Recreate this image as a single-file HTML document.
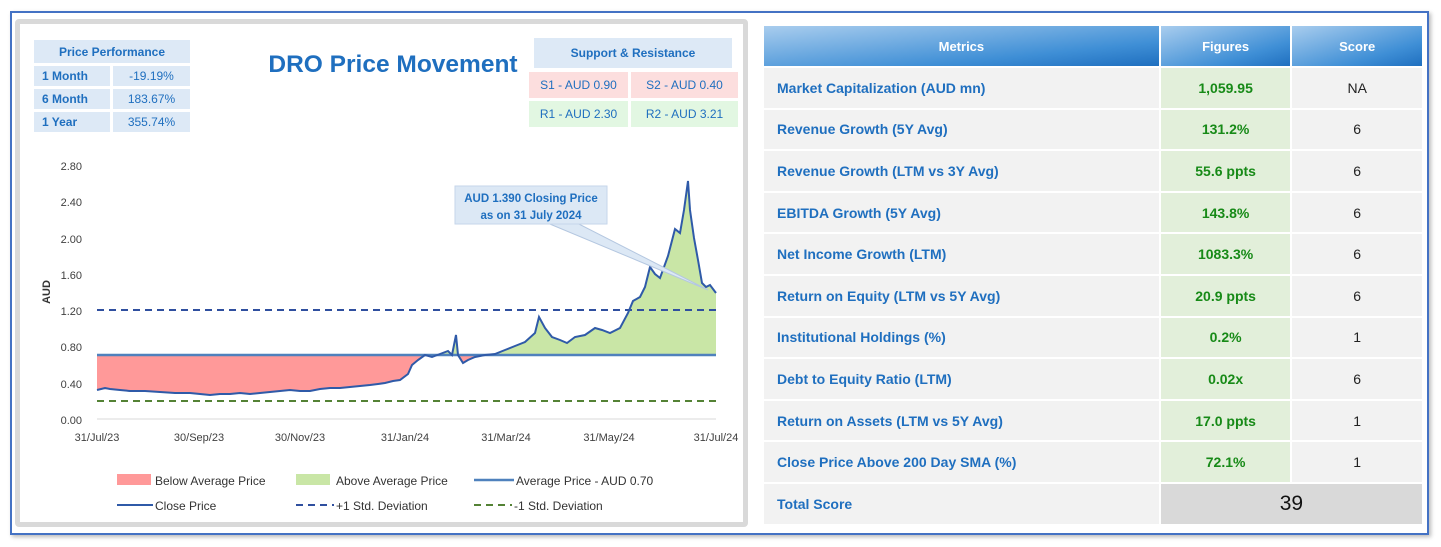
<!DOCTYPE html>
<html><head><meta charset="utf-8"><style>
*{margin:0;padding:0;box-sizing:border-box}
body{width:1441px;height:547px;background:#fff;position:relative;overflow:hidden;font-family:"Liberation Sans",sans-serif}
.outer{position:absolute;left:10px;top:11px;width:1419px;height:524px;border:2px solid #4472c4;box-shadow:2px 2px 4px #bbb}
.lp{position:absolute;left:15px;top:19px;width:733px;height:508px;border:5px solid #d9d9d9;border-radius:4px;background:#fff}
.c{position:absolute;display:flex;align-items:center;justify-content:center;font-size:13px;color:#1f6fbf}
</style></head><body>
<div class="outer"></div>
<div class="lp"></div>
<div class="c" style="left:34px;top:40px;width:156px;height:23px;background:#dde9f6;font-weight:bold;font-size:12px">Price Performance</div>
<div class="c" style="left:34px;top:66px;width:76px;height:20px;background:#dde9f6;font-weight:bold;font-size:12px;justify-content:flex-start;padding-left:8px">1 Month</div>
<div class="c" style="left:113px;top:66px;width:77px;height:20px;background:#dde9f6;font-size:12px">-19.19%</div>
<div class="c" style="left:34px;top:89px;width:76px;height:20px;background:#dde9f6;font-weight:bold;font-size:12px;justify-content:flex-start;padding-left:8px">6 Month</div>
<div class="c" style="left:113px;top:89px;width:77px;height:20px;background:#dde9f6;font-size:12px">183.67%</div>
<div class="c" style="left:34px;top:112px;width:76px;height:20px;background:#dde9f6;font-weight:bold;font-size:12px;justify-content:flex-start;padding-left:8px">1 Year</div>
<div class="c" style="left:113px;top:112px;width:77px;height:20px;background:#dde9f6;font-size:12px">355.74%</div>
<div class="c" style="left:260px;top:50px;width:266px;height:30px;font-size:24.5px;font-weight:bold;color:#1f6fbf">DRO Price Movement</div>
<div class="c" style="left:534px;top:38px;width:198px;height:30px;background:#dde9f6;font-weight:bold;font-size:12px">Support &amp; Resistance</div>
<div class="c" style="left:529px;top:72px;width:99px;height:26px;background:#fcdede;font-size:12px">S1 - AUD 0.90</div>
<div class="c" style="left:631px;top:72px;width:107px;height:26px;background:#fcdede;font-size:12px">S2 - AUD 0.40</div>
<div class="c" style="left:529px;top:101px;width:99px;height:26px;background:#e2f7e2;font-size:12px">R1 - AUD 2.30</div>
<div class="c" style="left:631px;top:101px;width:107px;height:26px;background:#e2f7e2;font-size:12px">R2 - AUD 3.21</div>
<svg style="position:absolute;left:0;top:0" width="760" height="547" font-family="Liberation Sans, sans-serif">
<g font-size="11" fill="#404040" text-anchor="end">
<text x="82" y="170">2.80</text><text x="82" y="206">2.40</text><text x="82" y="243">2.00</text><text x="82" y="279">1.60</text><text x="82" y="315">1.20</text><text x="82" y="351">0.80</text><text x="82" y="388">0.40</text><text x="82" y="424">0.00</text>
</g>
<text x="50" y="292" font-size="11" font-weight="bold" fill="#333" transform="rotate(-90 50 292)" text-anchor="middle">AUD</text>
<line x1="97" y1="419" x2="716" y2="419" stroke="#d9d9d9"/>
<g font-size="11" fill="#404040" text-anchor="middle">
<text x="97" y="441">31/Jul/23</text><text x="199" y="441">30/Sep/23</text><text x="300" y="441">30/Nov/23</text><text x="405" y="441">31/Jan/24</text><text x="506" y="441">31/Mar/24</text><text x="609" y="441">31/May/24</text><text x="716" y="441">31/Jul/24</text>
</g>
<polygon fill="#ff9999" points="97,355 97,390 110,389 130,391 160,392 190,393 210,395 230,394 250,394 270,392 290,390 310,391 330,388 350,387 370,385 385,383 400,380 408,374 412,365 418,360 425,355"/>
<polygon fill="#ff9999" points="458,355 463,363 468,360 475,357 480,355"/>
<polygon fill="#c9e6a6" points="425,355 432,357 440,354 448,351 452,355 456,335 458,355"/>
<polygon fill="#c9e6a6" points="480,355 485,355 495,354 505,350 515,346 525,342 535,333 539,317 545,328 552,337 560,340 567,343 575,337 585,335 595,328 602,330 610,333 620,328 628,313 633,301 640,297 645,287 650,267 655,274 660,278 668,256 675,229 680,233 684,210 688,181 690,210 694,238 698,260 702,283 706,287 710,285 716,293 716,355"/>
<line x1="97" y1="355" x2="716" y2="355" stroke="#4f81bd" stroke-width="2.5"/>
<line x1="97" y1="310" x2="716" y2="310" stroke="#2f4f9f" stroke-width="2" stroke-dasharray="7,5"/>
<line x1="97" y1="401" x2="716" y2="401" stroke="#548235" stroke-width="2" stroke-dasharray="7,5"/>
<polyline fill="none" stroke="#2f5aa8" stroke-width="2" points="97,390 105,388 110,389 120,390 130,391 145,391 160,392 175,393 190,393 200,394 210,395 220,394 230,394 240,393 250,394 260,393 270,392 280,391 290,390 300,391 310,391 320,389 330,388 340,388 350,387 360,386 370,385 378,384 385,383 393,381 400,380 408,374 412,365 418,360 425,355 432,357 440,354 448,351 452,355 456,335 458,355 463,363 468,360 475,357 485,355 495,354 505,350 515,346 525,342 535,333 539,317 545,328 552,337 560,340 567,343 575,337 585,335 595,328 602,330 610,333 620,328 628,313 633,301 640,297 645,287 650,267 655,274 660,278 668,256 675,229 680,233 684,210 688,181 690,210 694,238 698,260 702,283 706,287 710,285 716,293"/>
<polygon points="545,222 575,222 708,290" fill="#dce8f5" stroke="#b4c7e0"/>
<rect x="455" y="186" width="152" height="38" fill="#dce8f5" stroke="#c6d6ea"/>
<text x="531" y="202" font-size="11.5" font-weight="bold" fill="#1f6fbf" text-anchor="middle">AUD 1.390 Closing Price</text>
<text x="531" y="219" font-size="11.5" font-weight="bold" fill="#1f6fbf" text-anchor="middle">as on 31 July 2024</text>
<g font-size="12" fill="#333">
<rect x="117" y="474" width="34" height="11" fill="#ff9999"/><text x="155" y="485">Below Average Price</text>
<rect x="296" y="474" width="34" height="11" fill="#c9e6a6"/><text x="336" y="485">Above Average Price</text>
<line x1="474" y1="480" x2="514" y2="480" stroke="#4f81bd" stroke-width="2.5"/><text x="516" y="485">Average Price - AUD 0.70</text>
<line x1="117" y1="505" x2="153" y2="505" stroke="#2f5aa8" stroke-width="2"/><text x="155" y="510">Close Price</text>
<line x1="296" y1="505" x2="334" y2="505" stroke="#2f4f9f" stroke-width="2" stroke-dasharray="7,5"/><text x="336" y="510">+1 Std. Deviation</text>
<line x1="474" y1="505" x2="512" y2="505" stroke="#548235" stroke-width="2" stroke-dasharray="7,5"/><text x="514" y="510">-1 Std. Deviation</text>
</g>
</svg>
<div style="position:absolute;left:764px;top:26px;width:658px;height:40px;display:flex;gap:2px">
<div class="c" style="position:static;width:396px;height:40px;color:#fff;font-weight:bold;background:linear-gradient(to bottom right,#a9cdee,#3f8fd6 70%,#1f6fbf)">Metrics</div>
<div class="c" style="position:static;width:130px;height:40px;color:#fff;font-weight:bold;background:linear-gradient(to bottom right,#a9cdee,#3f8fd6 70%,#1f6fbf)">Figures</div>
<div class="c" style="position:static;width:130px;height:40px;color:#fff;font-weight:bold;background:linear-gradient(to bottom right,#a9cdee,#3f8fd6 70%,#1f6fbf)">Score</div>
</div>
<div style="position:absolute;left:764px;top:68px;width:658px">
<style>.r{display:flex;gap:2px;height:39.6px;margin-bottom:2px}.r div{display:flex;align-items:center;font-size:14px}.m{width:396px;background:#f2f2f2;color:#1f6fbf;font-weight:bold;padding-left:13px}.f{width:130px;background:#e2efda;color:#178a17;font-weight:bold;justify-content:center}.s{width:130px;background:#f2f2f2;color:#222;justify-content:center}</style>
<div class="r"><div class="m">Market Capitalization (AUD mn)</div><div class="f">1,059.95</div><div class="s">NA</div></div>
<div class="r"><div class="m">Revenue Growth (5Y Avg)</div><div class="f">131.2%</div><div class="s">6</div></div>
<div class="r"><div class="m">Revenue Growth (LTM vs 3Y Avg)</div><div class="f">55.6 ppts</div><div class="s">6</div></div>
<div class="r"><div class="m">EBITDA Growth (5Y Avg)</div><div class="f">143.8%</div><div class="s">6</div></div>
<div class="r"><div class="m">Net Income Growth (LTM)</div><div class="f">1083.3%</div><div class="s">6</div></div>
<div class="r"><div class="m">Return on Equity (LTM vs 5Y Avg)</div><div class="f">20.9 ppts</div><div class="s">6</div></div>
<div class="r"><div class="m">Institutional Holdings (%)</div><div class="f">0.2%</div><div class="s">1</div></div>
<div class="r"><div class="m">Debt to Equity Ratio (LTM)</div><div class="f">0.02x</div><div class="s">6</div></div>
<div class="r"><div class="m">Return on Assets (LTM vs 5Y Avg)</div><div class="f">17.0 ppts</div><div class="s">1</div></div>
<div class="r"><div class="m">Close Price Above 200 Day SMA (%)</div><div class="f">72.1%</div><div class="s">1</div></div>
<div class="r"><div class="m">Total Score</div><div style="width:262px;background:#d9d9d9;justify-content:center;font-size:21px;color:#111">39</div></div>
</div>
</body></html>
